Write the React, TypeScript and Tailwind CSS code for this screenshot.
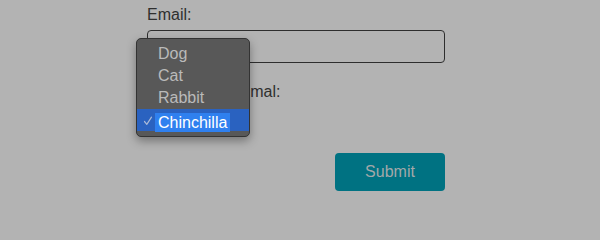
import React from "react";

export default function App() {
  return (
    <div
      className="relative w-full min-h-screen bg-[#b3b3b3] overflow-hidden text-[16px] text-[#2f2f2f]"
      style={{ fontFamily: '"Liberation Sans", Arial, sans-serif' }}
    >
      <div className="relative w-[600px] h-[214px]">
        <form className="flex flex-col w-[298px] ml-[147px] pt-[6px]">
          <label className="leading-[18px]">Email:</label>
          <div className="mt-[6px] h-[33px] w-[298px] rounded-[4px] border border-[#2e2e2e]" />
          <label className="mt-[20px] leading-[18px]">Choose an animal:</label>
          <div className="h-[22px] mt-[8px]" />
          <div className="flex justify-end mt-[22px]">
            <button
              type="button"
              className="w-[110px] h-[38px] rounded-[4px] bg-[#007282] text-[#a3a8a9] leading-[38px]"
            >
              Submit
            </button>
          </div>
        </form>

        <div className="absolute left-[136px] top-[38px] w-[114px] h-[99px] rounded-[5px] border border-[#333333] bg-[#585858] pt-[4px] shadow-[0_4px_10px_rgba(0,0,0,0.35)]">
          <div className="h-[22px] leading-[22px] pl-[21px] text-[#bababa]">Dog</div>
          <div className="h-[22px] leading-[22px] pl-[21px] text-[#bababa]">Cat</div>
          <div className="h-[22px] leading-[22px] pl-[21px] text-[#bababa]">Rabbit</div>
          <div className="relative h-[22px] bg-[#2a62c0] pl-[18px] pt-[2px]">
            <svg
              className="absolute left-[6px] top-[7px]"
              width="10"
              height="10"
              viewBox="0 0 10 10"
              fill="none"
            >
              <polyline
                points="1.5,5.5 3.8,8.3 8.5,1.2"
                stroke="#a9b9d8"
                strokeWidth="1.2"
                strokeLinecap="round"
                strokeLinejoin="round"
              />
            </svg>
            <span className="inline-block h-[19px] leading-[19px] bg-[#2f80ef] pl-[3px] pr-[3px] text-white">
              Chinchilla
            </span>
          </div>
        </div>
      </div>
    </div>
  );
}
